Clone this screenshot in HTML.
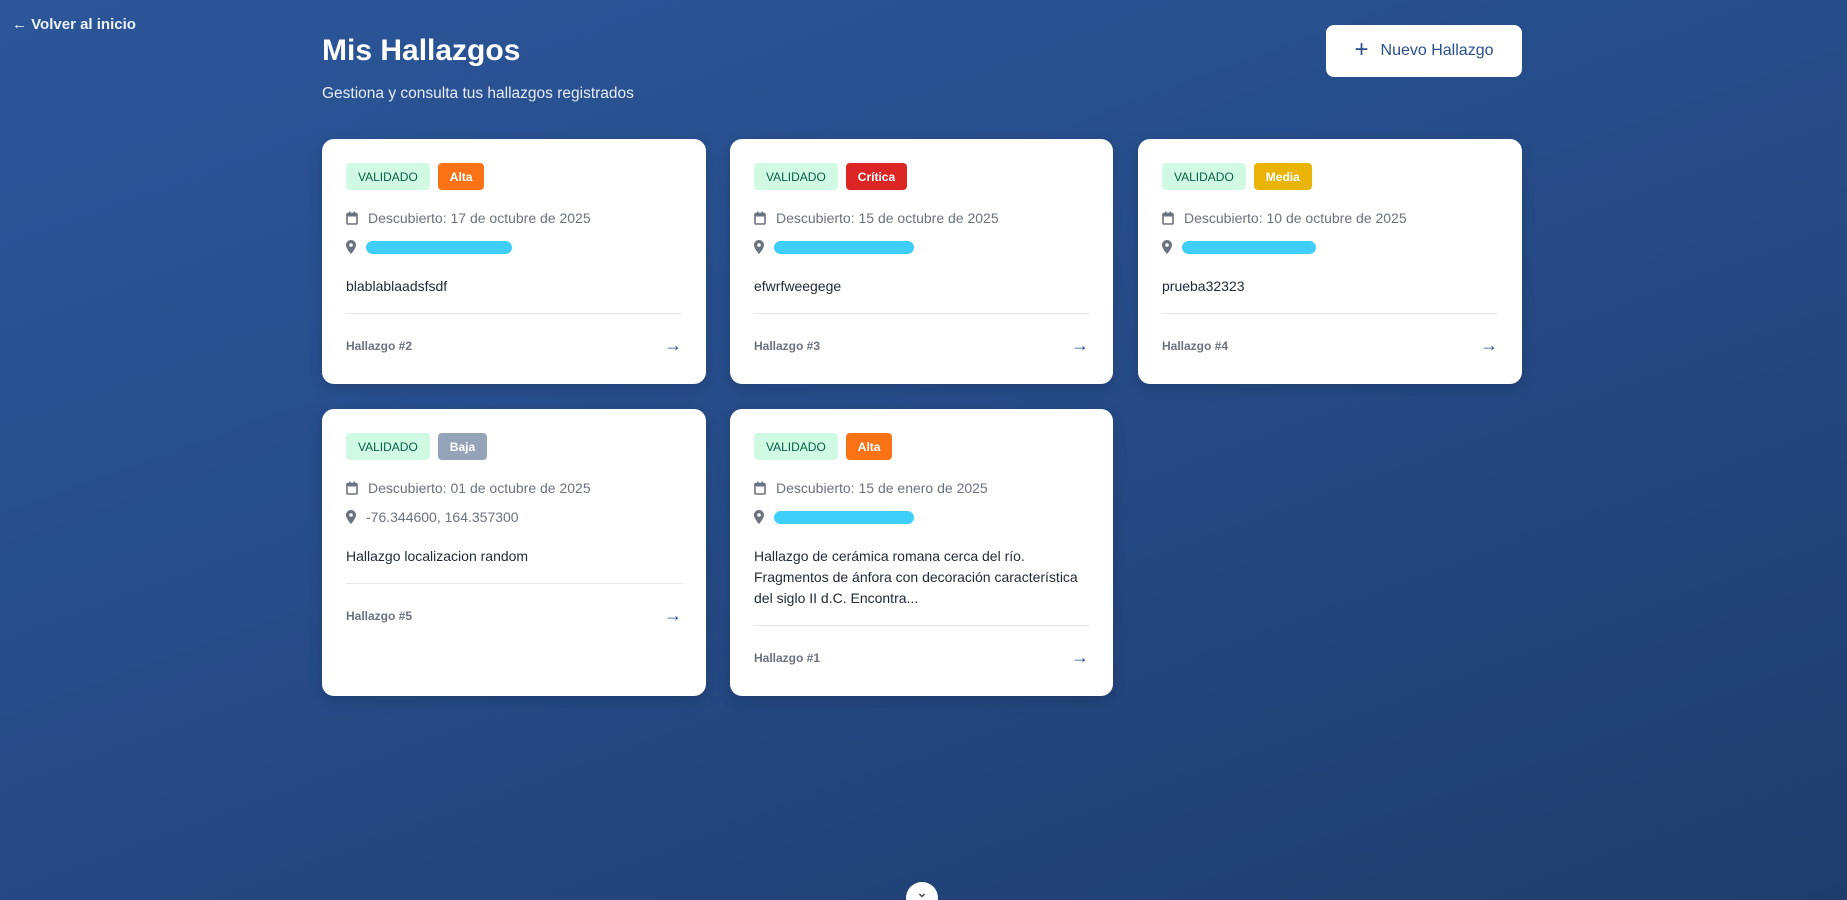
<!DOCTYPE html>
<html><head><meta charset="utf-8"><style>
*{box-sizing:border-box;margin:0;padding:0}
html,body{width:1847px;height:900px;overflow:hidden;background:#24477f}
body{font-family:"Liberation Sans",sans-serif;position:relative;color:#fff}
.bg{position:absolute;left:0;top:0;width:1847px;height:900px;background:linear-gradient(160deg,#2c5699 0%,#264c89 45%,#1f3d6c 100%)}
.back{position:absolute;left:12px;top:16px;font-size:15px;font-weight:bold;color:#eef2fa}
h1{position:absolute;left:322px;top:34px;font-size:30px;font-weight:bold;color:#fff}
.sub{position:absolute;left:322px;top:85px;font-size:15.5px;color:#e6ecf6}
.btn{position:absolute;left:1326px;top:25px;width:196px;height:52px;background:#fff;border-radius:8px;color:#2a4f8c;font-size:16px;display:flex;align-items:center;justify-content:center;gap:12px}
.btn span.p{font-size:24px;font-weight:300;line-height:1;margin-top:-3px}
.card{position:absolute;background:#fff;border-radius:12px;padding:24px;color:#1f2937;box-shadow:0 4px 14px rgba(0,0,0,.15)}
.badges{display:flex;gap:8px;height:27px}
.b{height:27px;padding:0 12px;border-radius:4px;font-size:12px;display:flex;align-items:center}
.v{background:#d1fae5;color:#065f46}
.alta{background:#f97316;color:#fff;font-weight:bold}
.crit{background:#dc2626;color:#fff;font-weight:bold}
.media{background:#eab308;color:#fff;font-weight:bold}
.baja{background:#94a3b8;color:#fff;font-weight:bold}
.row{display:flex;align-items:center;gap:10px;font-size:14px;color:#6b7280;height:20px}
.r1{margin-top:18px}.r2{margin-top:9px}
.desc{margin-top:19px;font-size:14px;line-height:21px;color:#1f2937}
.hr{border-top:1px solid #e5e7eb;margin-top:16px}
.foot{display:flex;justify-content:space-between;margin-top:25px;font-size:12px;color:#6b7280;font-weight:bold}
.arr{color:#2a4f8c;font-size:18px;font-weight:normal;margin-top:-4px}
.scr{display:inline-block;height:13px;width:150px;border-radius:7px;background:#3fcdfa}
</style></head><body>
<div class="bg"></div>
<div class="back">← Volver al inicio</div>
<h1>Mis Hallazgos</h1>
<div class="sub">Gestiona y consulta tus hallazgos registrados</div>
<div class="btn"><span class="p">+</span><span>Nuevo Hallazgo</span></div>

<svg width="0" height="0" style="position:absolute"><defs>
<symbol id="cal" viewBox="0 0 12 14"><rect x="1" y="2.5" width="10" height="10.5" rx="1" fill="none" stroke="#6b7280" stroke-width="1.6"/><rect x="1" y="2.5" width="10" height="3" fill="#6b7280"/><rect x="3" y="0.5" width="1.5" height="3" fill="#6b7280"/><rect x="7.5" y="0.5" width="1.5" height="3" fill="#6b7280"/></symbol>
<symbol id="pin" viewBox="0 0 10 14"><path d="M5 0C2.2 0 0 2.2 0 5c0 3.5 5 9 5 9s5-5.5 5-9C10 2.2 7.8 0 5 0zm0 6.8A1.8 1.8 0 1 1 5 3.2a1.8 1.8 0 0 1 0 3.6z" fill="#6b7280"/></symbol>
</defs></svg>

<div class="card" style="left:322px;top:139px;width:384px;height:245px">
<div class="badges"><div class="b v">VALIDADO</div><div class="b alta">Alta</div></div>
<div class="row r1"><svg width="12" height="14"><use href="#cal"/></svg>Descubierto: 17 de octubre de 2025</div>
<div class="row r2"><svg width="10" height="14"><use href="#pin"/></svg><span class="scr" style="width:146px"></span></div>
<div class="desc">blablablaadsfsdf</div>
<div class="hr"></div>
<div class="foot"><span>Hallazgo #2</span><span class="arr">→</span></div>
</div>

<div class="card" style="left:730px;top:139px;width:383px;height:245px">
<div class="badges"><div class="b v">VALIDADO</div><div class="b crit">Crítica</div></div>
<div class="row r1"><svg width="12" height="14"><use href="#cal"/></svg>Descubierto: 15 de octubre de 2025</div>
<div class="row r2"><svg width="10" height="14"><use href="#pin"/></svg><span class="scr" style="width:140px"></span></div>
<div class="desc">efwrfweegege</div>
<div class="hr"></div>
<div class="foot"><span>Hallazgo #3</span><span class="arr">→</span></div>
</div>

<div class="card" style="left:1138px;top:139px;width:384px;height:245px">
<div class="badges"><div class="b v">VALIDADO</div><div class="b media">Media</div></div>
<div class="row r1"><svg width="12" height="14"><use href="#cal"/></svg>Descubierto: 10 de octubre de 2025</div>
<div class="row r2"><svg width="10" height="14"><use href="#pin"/></svg><span class="scr" style="width:134px"></span></div>
<div class="desc">prueba32323</div>
<div class="hr"></div>
<div class="foot"><span>Hallazgo #4</span><span class="arr">→</span></div>
</div>

<div class="card" style="left:322px;top:409px;width:384px;height:287px">
<div class="badges"><div class="b v">VALIDADO</div><div class="b baja">Baja</div></div>
<div class="row r1"><svg width="12" height="14"><use href="#cal"/></svg>Descubierto: 01 de octubre de 2025</div>
<div class="row r2"><svg width="10" height="14"><use href="#pin"/></svg>-76.344600, 164.357300</div>
<div class="desc">Hallazgo localizacion random</div>
<div class="hr"></div>
<div class="foot"><span>Hallazgo #5</span><span class="arr">→</span></div>
</div>

<div class="card" style="left:730px;top:409px;width:383px;height:287px">
<div class="badges"><div class="b v">VALIDADO</div><div class="b alta">Alta</div></div>
<div class="row r1"><svg width="12" height="14"><use href="#cal"/></svg>Descubierto: 15 de enero de 2025</div>
<div class="row r2"><svg width="10" height="14"><use href="#pin"/></svg><span class="scr" style="width:140px"></span></div>
<div class="desc">Hallazgo de cerámica romana cerca del río.<br>Fragmentos de ánfora con decoración característica<br>del siglo II d.C. Encontra...</div>
<div class="hr"></div>
<div class="foot"><span>Hallazgo #1</span><span class="arr">→</span></div>
</div>

<div style="position:absolute;left:906px;top:882px;width:32px;height:32px;border-radius:50%;background:#fff;color:#555;font-size:13px;text-align:center;line-height:22px;font-weight:bold">⌄</div>
</body></html>
